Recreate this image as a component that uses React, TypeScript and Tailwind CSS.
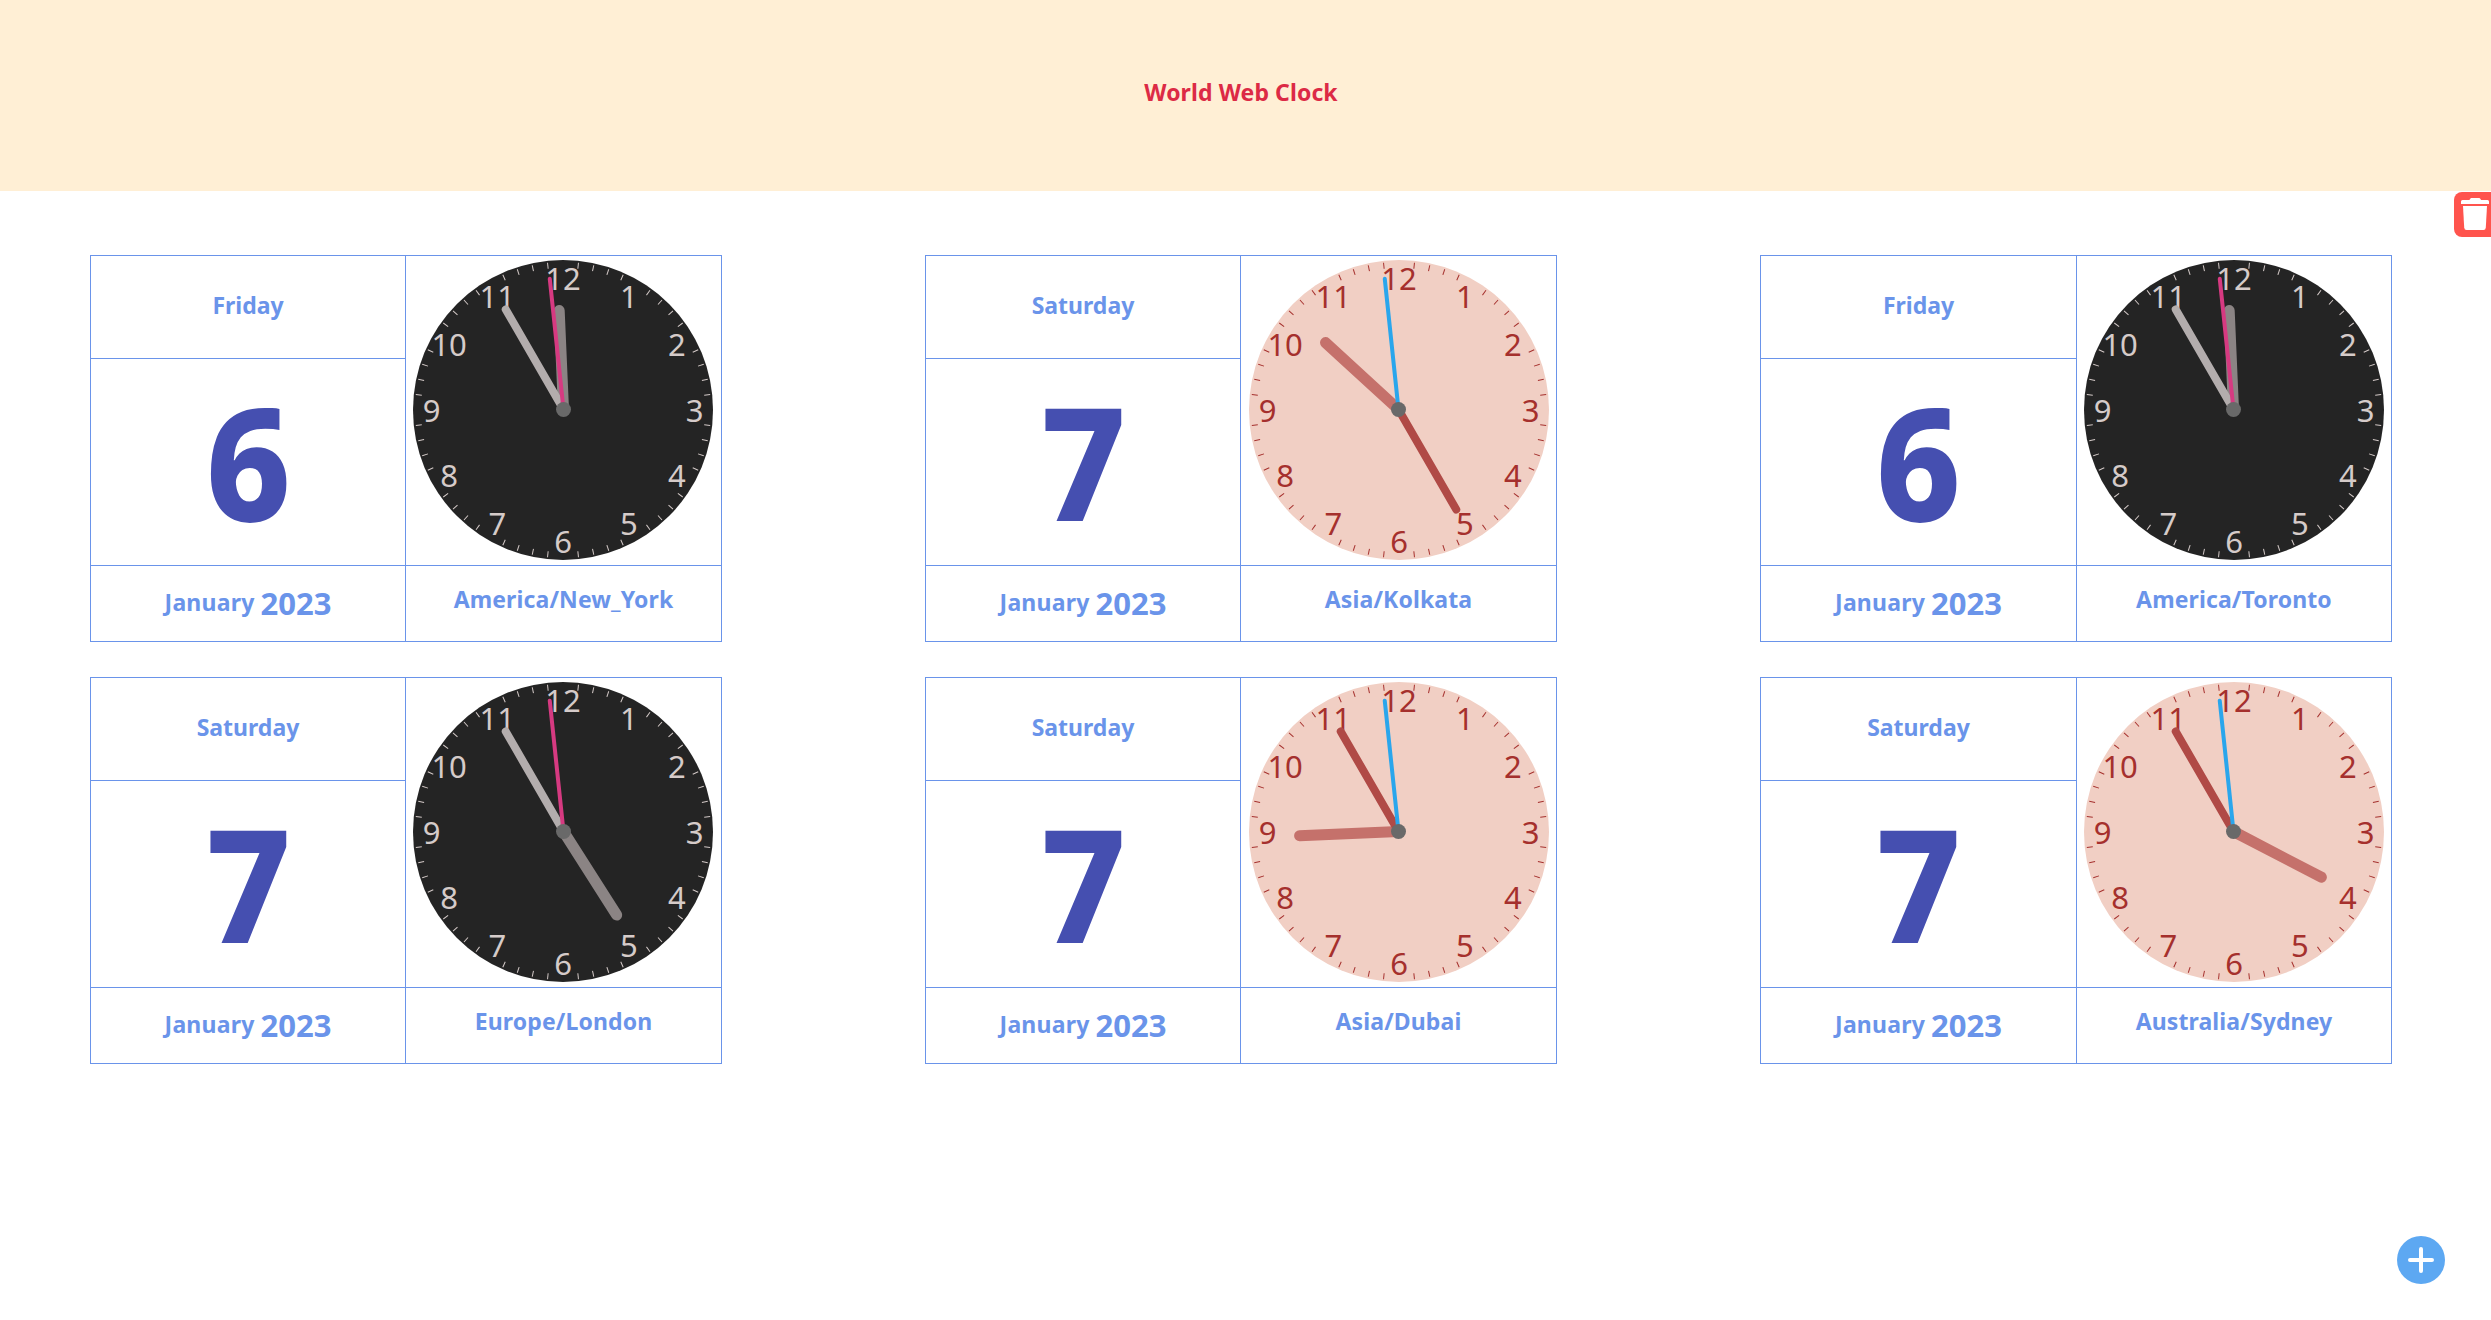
type Theme = { face: string; ink: string; hour: string; minute: string; second: string };

const dark: Theme = { face: "#242424", ink: "#d5cbc9", hour: "#8b8484", minute: "#b3adad", second: "#d63a81" };
const light: Theme = { face: "#f1cfc4", ink: "#a5302d", hour: "#c5716b", minute: "#b04a46", second: "#2aa6ec" };

type Zone = { day: string; date: string; zone: string; h: number; m: number; theme: Theme; cols: string; pad: string; hx: number };

const left = { cols: "grid-cols-[315px_316px]", pad: "pl-[7px]", hx: 0.5 };
const middle = { cols: "grid-cols-[315px_316px]", pad: "pl-[8px]", hx: -0.5 };
const right = { cols: "grid-cols-[316px_315px]", pad: "pl-[7px]", hx: -0.5 };

const zones: Zone[] = [
  { day: "Friday", date: "6", zone: "America/New_York", h: 357.5, m: 330, theme: dark, ...left },
  { day: "Saturday", date: "7", zone: "Asia/Kolkata", h: 312.5, m: 150, theme: light, ...middle },
  { day: "Friday", date: "6", zone: "America/Toronto", h: 357.5, m: 330, theme: dark, ...right },
  { day: "Saturday", date: "7", zone: "Europe/London", h: 147.5, m: 330, theme: dark, ...left },
  { day: "Saturday", date: "7", zone: "Asia/Dubai", h: 267.5, m: 330, theme: light, ...middle },
  { day: "Saturday", date: "7", zone: "Australia/Sydney", h: 117.5, m: 330, theme: light, ...right },
];

function Clock({ h, m, theme, hx }: { h: number; m: number; theme: Theme; hx: number }) {
  const minutes = Array.from({ length: 60 }, (_, i) => i).filter((i) => i % 5 !== 0);
  return (
    <svg width="300" height="300" viewBox="-150 -150 300 300" className="block shrink-0 overflow-visible font-normal">
      <circle r="150" fill={theme.face} />
      {minutes.map((i) => (
        <line key={i} y1="-148" y2="-142" stroke={theme.ink} strokeWidth="1" transform={`rotate(${i * 6})`} />
      ))}
      {Array.from({ length: 12 }, (_, i) => i + 1).map((n) => {
        const a = (n * Math.PI) / 6;
        return (
          <text key={n} x={131.5 * Math.sin(a)} y={-131.5 * Math.cos(a) + 11.5} textAnchor="middle" fontSize="31" fill={theme.ink}>
            {n}
          </text>
        );
      })}
      <g transform={`translate(${hx} -0.5)`} strokeLinecap="round">
        <line y2="-99" stroke={theme.hour} strokeWidth="11" transform={`rotate(${h})`} />
        <line y2="-115.500" stroke={theme.minute} strokeWidth="8" transform={`rotate(${m})`} />
        <line y2="-131.500" stroke={theme.second} strokeWidth="4" transform="rotate(354)" />
        <circle r="7.5" fill="#696969" />
      </g>
    </svg>
  );
}

function Card({ z }: { z: Zone }) {
  return (
    <section className={`grid h-[387px] w-[632px] grid-rows-[103px_207px_76px] border-t border-l border-[#6a94ea] ${z.cols}`}>
      <div className="flex items-center justify-center border-r border-b border-[#6a94ea] pb-[3px]">
        <span>{z.day}</span>
      </div>
      <div className={`row-span-2 flex items-start border-r border-b border-[#6a94ea] pt-1 ${z.pad}`}>
        <Clock h={z.h} m={z.m} theme={z.theme} hx={z.hx} />
      </div>
      <div className="flex items-center justify-center border-r border-b border-[#6a94ea] pb-1 text-[157px] leading-none font-extrabold text-[#454fb0]">
        <span className="scale-x-[0.94]">{z.date}</span>
      </div>
      <div className="flex items-baseline justify-center gap-1.5 border-r border-b border-[#6a94ea] pt-[17px] leading-10">
        <span className="-translate-y-1 tracking-[0.2px]">January</span>
        <span className="text-[31px]">2023</span>
      </div>
      <div className="flex justify-center border-r border-b border-[#6a94ea] pt-[15px] leading-9">
        <span className="tracking-[0.12px]">{z.zone}</span>
      </div>
    </section>
  );
}

export default function App() {
  return (
    <div className="relative h-[1320px] w-full overflow-hidden bg-white font-['Noto_Sans',sans-serif] text-[23px] font-bold text-[#6a94ea]">
      <header className="flex h-[191px] items-center justify-center bg-[#ffefd5] pr-[9px] pb-[6px] text-[#dc2a45]">
        <h1 className="tracking-[0.1px]">World Web Clock</h1>
      </header>
      <main className="grid grid-cols-[632px_632px_632px] gap-x-[203px] gap-y-[35px] pt-16 pl-[90px]">
        {zones.map((z) => (
          <Card key={z.zone} z={z} />
        ))}
      </main>
      <button aria-label="Delete" className="absolute top-[192px] left-[2454px] h-[45px] w-[45px] rounded-lg bg-[#ff544d]">
        <svg width="45" height="45" viewBox="0 0 45 45" fill="#fff">
          <path d="M8.500 8H15.500c.6-1.500 1.200-2 2.500-2h6.500c1.300 0 1.900.5 2.500 2H33.500a1.500 1.500 0 0 1 1.500 1.500v2.500H7V9.500A1.500 1.500 0 0 1 8.500 8Z" />
          <path d="M9 14H33L31.800 35.500Q31.600 38 29.500 38H12.500Q10.400 38 10.200 35.500Z" />
        </svg>
      </button>
      <button aria-label="Add" className="absolute top-[1236px] left-[2397px] h-12 w-12 rounded-full bg-[#5da8f2]">
        <svg width="48" height="48" viewBox="0 0 48 48" stroke="#fff" strokeWidth="4" strokeLinecap="round">
          <path d="M24 13V35M13 24H35" />
        </svg>
      </button>
    </div>
  );
}
